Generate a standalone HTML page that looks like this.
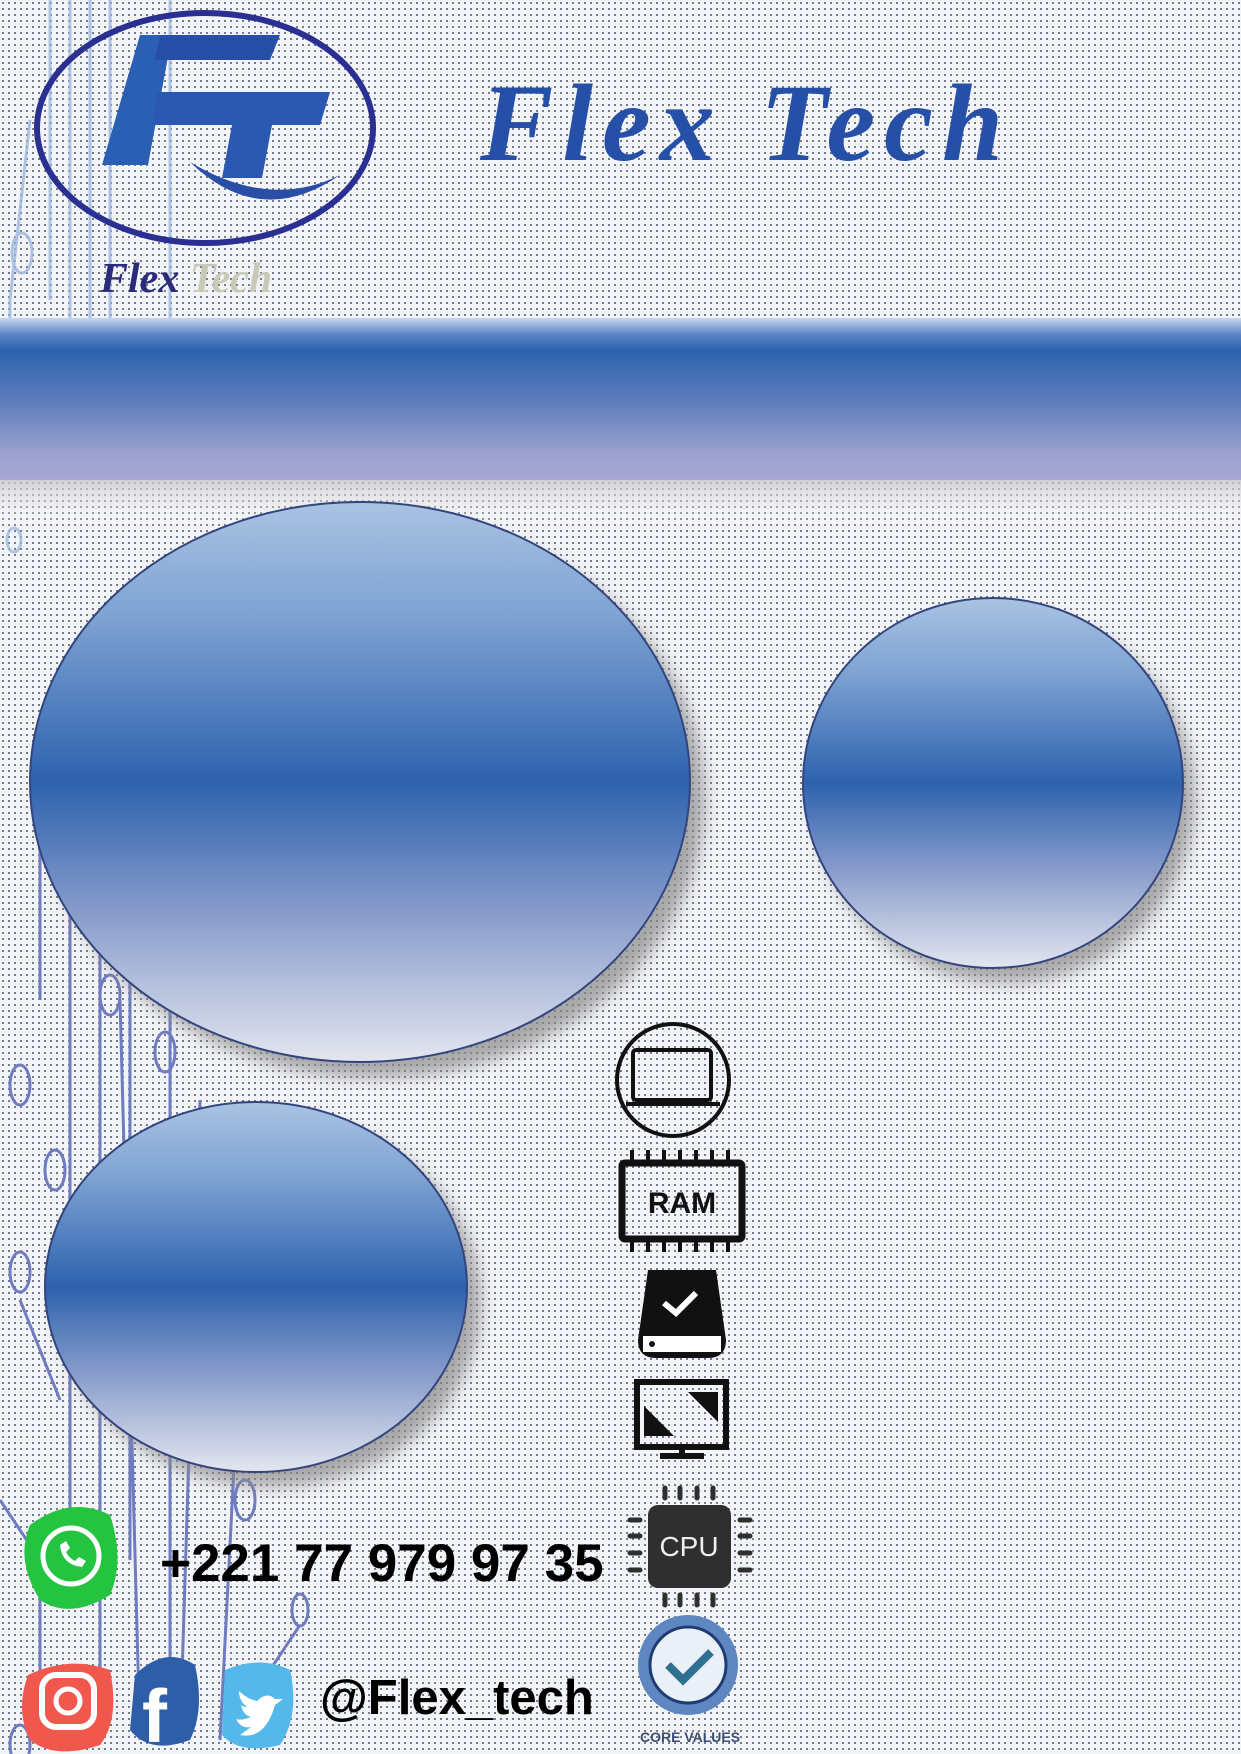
<!DOCTYPE html>
<html><head><meta charset="utf-8"><style>
html,body{margin:0;padding:0}
body{width:1241px;height:1754px;position:relative;overflow:hidden;
background-color:#f3f4f7;
background-image:radial-gradient(circle,#5a6478 0.8px,transparent 1.2px);
background-size:6px 6px;font-family:"Liberation Sans",sans-serif}
.abs{position:absolute}
</style></head><body>
<svg class="abs" style="left:0;top:0" width="1241" height="1754" viewBox="0 0 1241 1754">
<defs>
<linearGradient id="band" x1="0" y1="0" x2="0" y2="1">
<stop offset="0" stop-color="#c8d8ee"/><stop offset="0.1" stop-color="#5b86c6"/><stop offset="0.2" stop-color="#2d62ae"/><stop offset="0.5" stop-color="#5a7cbc"/><stop offset="0.85" stop-color="#9ea2d0"/><stop offset="1" stop-color="#a6a8d2"/></linearGradient>
<linearGradient id="shade" x1="0" y1="0" x2="0" y2="1"><stop offset="0" stop-color="#c8c8cc" stop-opacity="0.8"/><stop offset="1" stop-color="#ffffff" stop-opacity="0"/></linearGradient>
<linearGradient id="ball" x1="0" y1="0" x2="0" y2="1">
<stop offset="0" stop-color="#a9c3e2"/><stop offset="0.2" stop-color="#7fa3d3"/><stop offset="0.5" stop-color="#2d62ae"/><stop offset="0.75" stop-color="#8da0cd"/><stop offset="1" stop-color="#e4e6f0"/></linearGradient>
<filter id="sh" x="-20%" y="-20%" width="140%" height="140%"><feGaussianBlur stdDeviation="8"/></filter>
</defs>
<g fill="none" stroke="#9eb8e0" stroke-width="3" opacity="0.8">
<path d="M50 0V300M70 0V330M90 0V330M110 0V330M170 0V330"/>
<ellipse cx="22" cy="253" rx="10" ry="20"/>
<path d="M30 120L10 300V480"/><ellipse cx="14" cy="540" rx="7" ry="12"/>
</g>
<g fill="none" stroke="#6f7cc0" stroke-width="3">
<path d="M40 820V1000M70 760V1550M100 760V1740M130 900V1560M150 840L160 1000M120 1000L140 1740M170 1000V1740M200 1100L180 1740M240 1350L220 1740"/>
<ellipse cx="20" cy="1085" rx="10" ry="20"/><ellipse cx="55" cy="1170" rx="10" ry="20"/>
<ellipse cx="110" cy="995" rx="10" ry="20"/><ellipse cx="165" cy="1052" rx="10" ry="20"/>
<ellipse cx="20" cy="1272" rx="10" ry="20"/><ellipse cx="245" cy="1365" rx="10" ry="20"/>
<ellipse cx="245" cy="1500" rx="10" ry="20"/><ellipse cx="300" cy="1610" rx="8" ry="16"/>
<ellipse cx="20" cy="1745" rx="10" ry="20"/><ellipse cx="90" cy="1720" rx="10" ry="20"/>
<path d="M300 1625L250 1700M0 1500L40 1560V1740M20 1300L60 1400"/>
</g>
<rect x="0" y="480" width="1241" height="50" fill="url(#shade)"/>
<rect x="0" y="318" width="1241" height="162" fill="url(#band)"/>
<ellipse cx="375" cy="798" rx="330" ry="280" fill="#888" filter="url(#sh)" opacity="0.7"/>
<ellipse cx="360" cy="782" rx="330" ry="280" fill="url(#ball)" stroke="#33457e" stroke-width="2"/>
<ellipse cx="1005" cy="798" rx="190" ry="185" fill="#888" filter="url(#sh)" opacity="0.7"/>
<ellipse cx="993" cy="783" rx="190" ry="185" fill="url(#ball)" stroke="#33457e" stroke-width="2"/>
<ellipse cx="270" cy="1302" rx="211" ry="185" fill="#888" filter="url(#sh)" opacity="0.7"/>
<ellipse cx="256" cy="1287" rx="211" ry="185" fill="url(#ball)" stroke="#33457e" stroke-width="2"/>
<ellipse cx="205" cy="128" rx="168" ry="115" fill="none" stroke="#2a2f92" stroke-width="6"/>
<path d="M140 35H172L148 165H102Z" fill="#2b5fb4"/>
<path d="M160 35H280L270 60H155Z" fill="#2650a8"/>
<path d="M158 92H330L320 125H272L262 178H222L232 125H152Z" fill="#2a58b0"/>
<path d="M190 162Q260 230 340 175Q270 210 190 162Z" fill="#2a4da6"/>
<text x="100" y="292" font-family="Liberation Serif,serif" font-style="italic" font-weight="bold" font-size="42" fill="#2a2c7a">Flex <tspan fill="#c9c9b8">Tech</tspan></text>
<text x="480" y="160" font-family="Liberation Serif,serif" font-style="italic" font-weight="bold" font-size="110" fill="#2650a8" letter-spacing="9">Flex Tech</text>
<g stroke="#111" fill="none" stroke-width="4">
<circle cx="673" cy="1080" r="56"/><rect x="633" y="1050" width="78" height="50" rx="3"/><path d="M626 1104H720"/>
<rect x="622" y="1163" width="120" height="76" rx="3" stroke-width="7"/>
<path d="M632 1150v12M648 1150v12M664 1150v12M680 1150v12M696 1150v12M712 1150v12M728 1150v12M632 1240v12M648 1240v12M664 1240v12M680 1240v12M696 1240v12M712 1240v12M728 1240v12" stroke-width="4"/>
<rect x="637" y="1382" width="89" height="65" stroke-width="6"/><path d="M682 1447v8M660 1456h44" stroke-width="6"/>
</g>
<text x="682" y="1213" text-anchor="middle" font-weight="bold" font-size="30" fill="#111">RAM</text>
<path d="M648 1270H716L726 1340Q726 1358 708 1358H656Q638 1358 638 1340Z" fill="#111"/>
<rect x="643" y="1336" width="78" height="16" fill="#fff"/><circle cx="652" cy="1344" r="3" fill="#111"/>
<path d="M664 1303l12 10 20-20" stroke="#fff" stroke-width="6" fill="none"/>
<path d="M644 1436V1406L674 1436Z M718 1392V1422L688 1392Z" fill="#111"/>
<rect x="648" y="1505" width="83" height="83" rx="10" fill="#2f2f2f"/>
<g stroke="#2f2f2f" stroke-width="5" stroke-linecap="round">
<path d="M665 1488v10M680 1488v10M697 1488v10M713 1488v10M665 1595v10M680 1595v10M697 1595v10M713 1595v10M630 1520h10M630 1536h10M630 1553h10M630 1570h10M740 1520h10M740 1536h10M740 1553h10M740 1570h10"/></g>
<text x="689" y="1556" text-anchor="middle" font-size="28" fill="#eee">CPU</text>
<circle cx="688" cy="1665" r="50" fill="#5e86c0"/><circle cx="688" cy="1665" r="38" fill="#eaf0f8" stroke="#1e3c72" stroke-width="3"/>
<path d="M668 1665l15 15 28-28" stroke="#2f6f8f" stroke-width="8" fill="none"/>
<text x="690" y="1742" text-anchor="middle" font-size="14" font-weight="bold" fill="#3b4e74">CORE VALUES</text>
<path d="M30 1525Q70 1495 110 1515Q125 1560 110 1595Q70 1620 40 1600Q15 1560 30 1525Z" fill="#25c440"/>
<circle cx="71" cy="1556" r="28" fill="none" stroke="#fff" stroke-width="5"/>
<path d="M60 1545q2 20 22 22l4-6-7-4-4 4q-6-3-9-9l4-4-4-7z" fill="#fff"/>
<path d="M28 1675Q70 1655 110 1670Q120 1720 100 1745Q55 1760 30 1740Q15 1710 28 1675Z" fill="#f0584e"/>
<rect x="42" y="1675" width="52" height="52" rx="14" fill="none" stroke="#fff" stroke-width="6"/><circle cx="68" cy="1701" r="12" fill="none" stroke="#fff" stroke-width="5"/>
<path d="M135 1675Q165 1645 195 1665Q205 1710 190 1740Q150 1755 130 1730Z" fill="#2e5ea8"/>
<text x="142" y="1742" font-weight="bold" font-size="75" fill="#fff">f</text>
<path d="M225 1670Q260 1655 290 1670Q300 1715 280 1745Q240 1755 222 1735Z" fill="#55b8ea"/>
<path d="M240 1735q25 5 35-30l8-6-8 0q-8-8-18 2-10-2-18-10 0 10 8 16-4 0-6-2 2 10 10 12-10 4-15 2 5 10 15 8-8 6-11 8z" fill="#fff"/>
</svg>
<div class="abs" style="left:160px;top:1533px;font-size:53px;font-weight:bold;color:#000">+221 77 979 97 35</div>
<div class="abs" style="left:320px;top:1670px;font-size:49px;font-weight:bold;color:#000">@Flex_tech</div>
</body></html>
